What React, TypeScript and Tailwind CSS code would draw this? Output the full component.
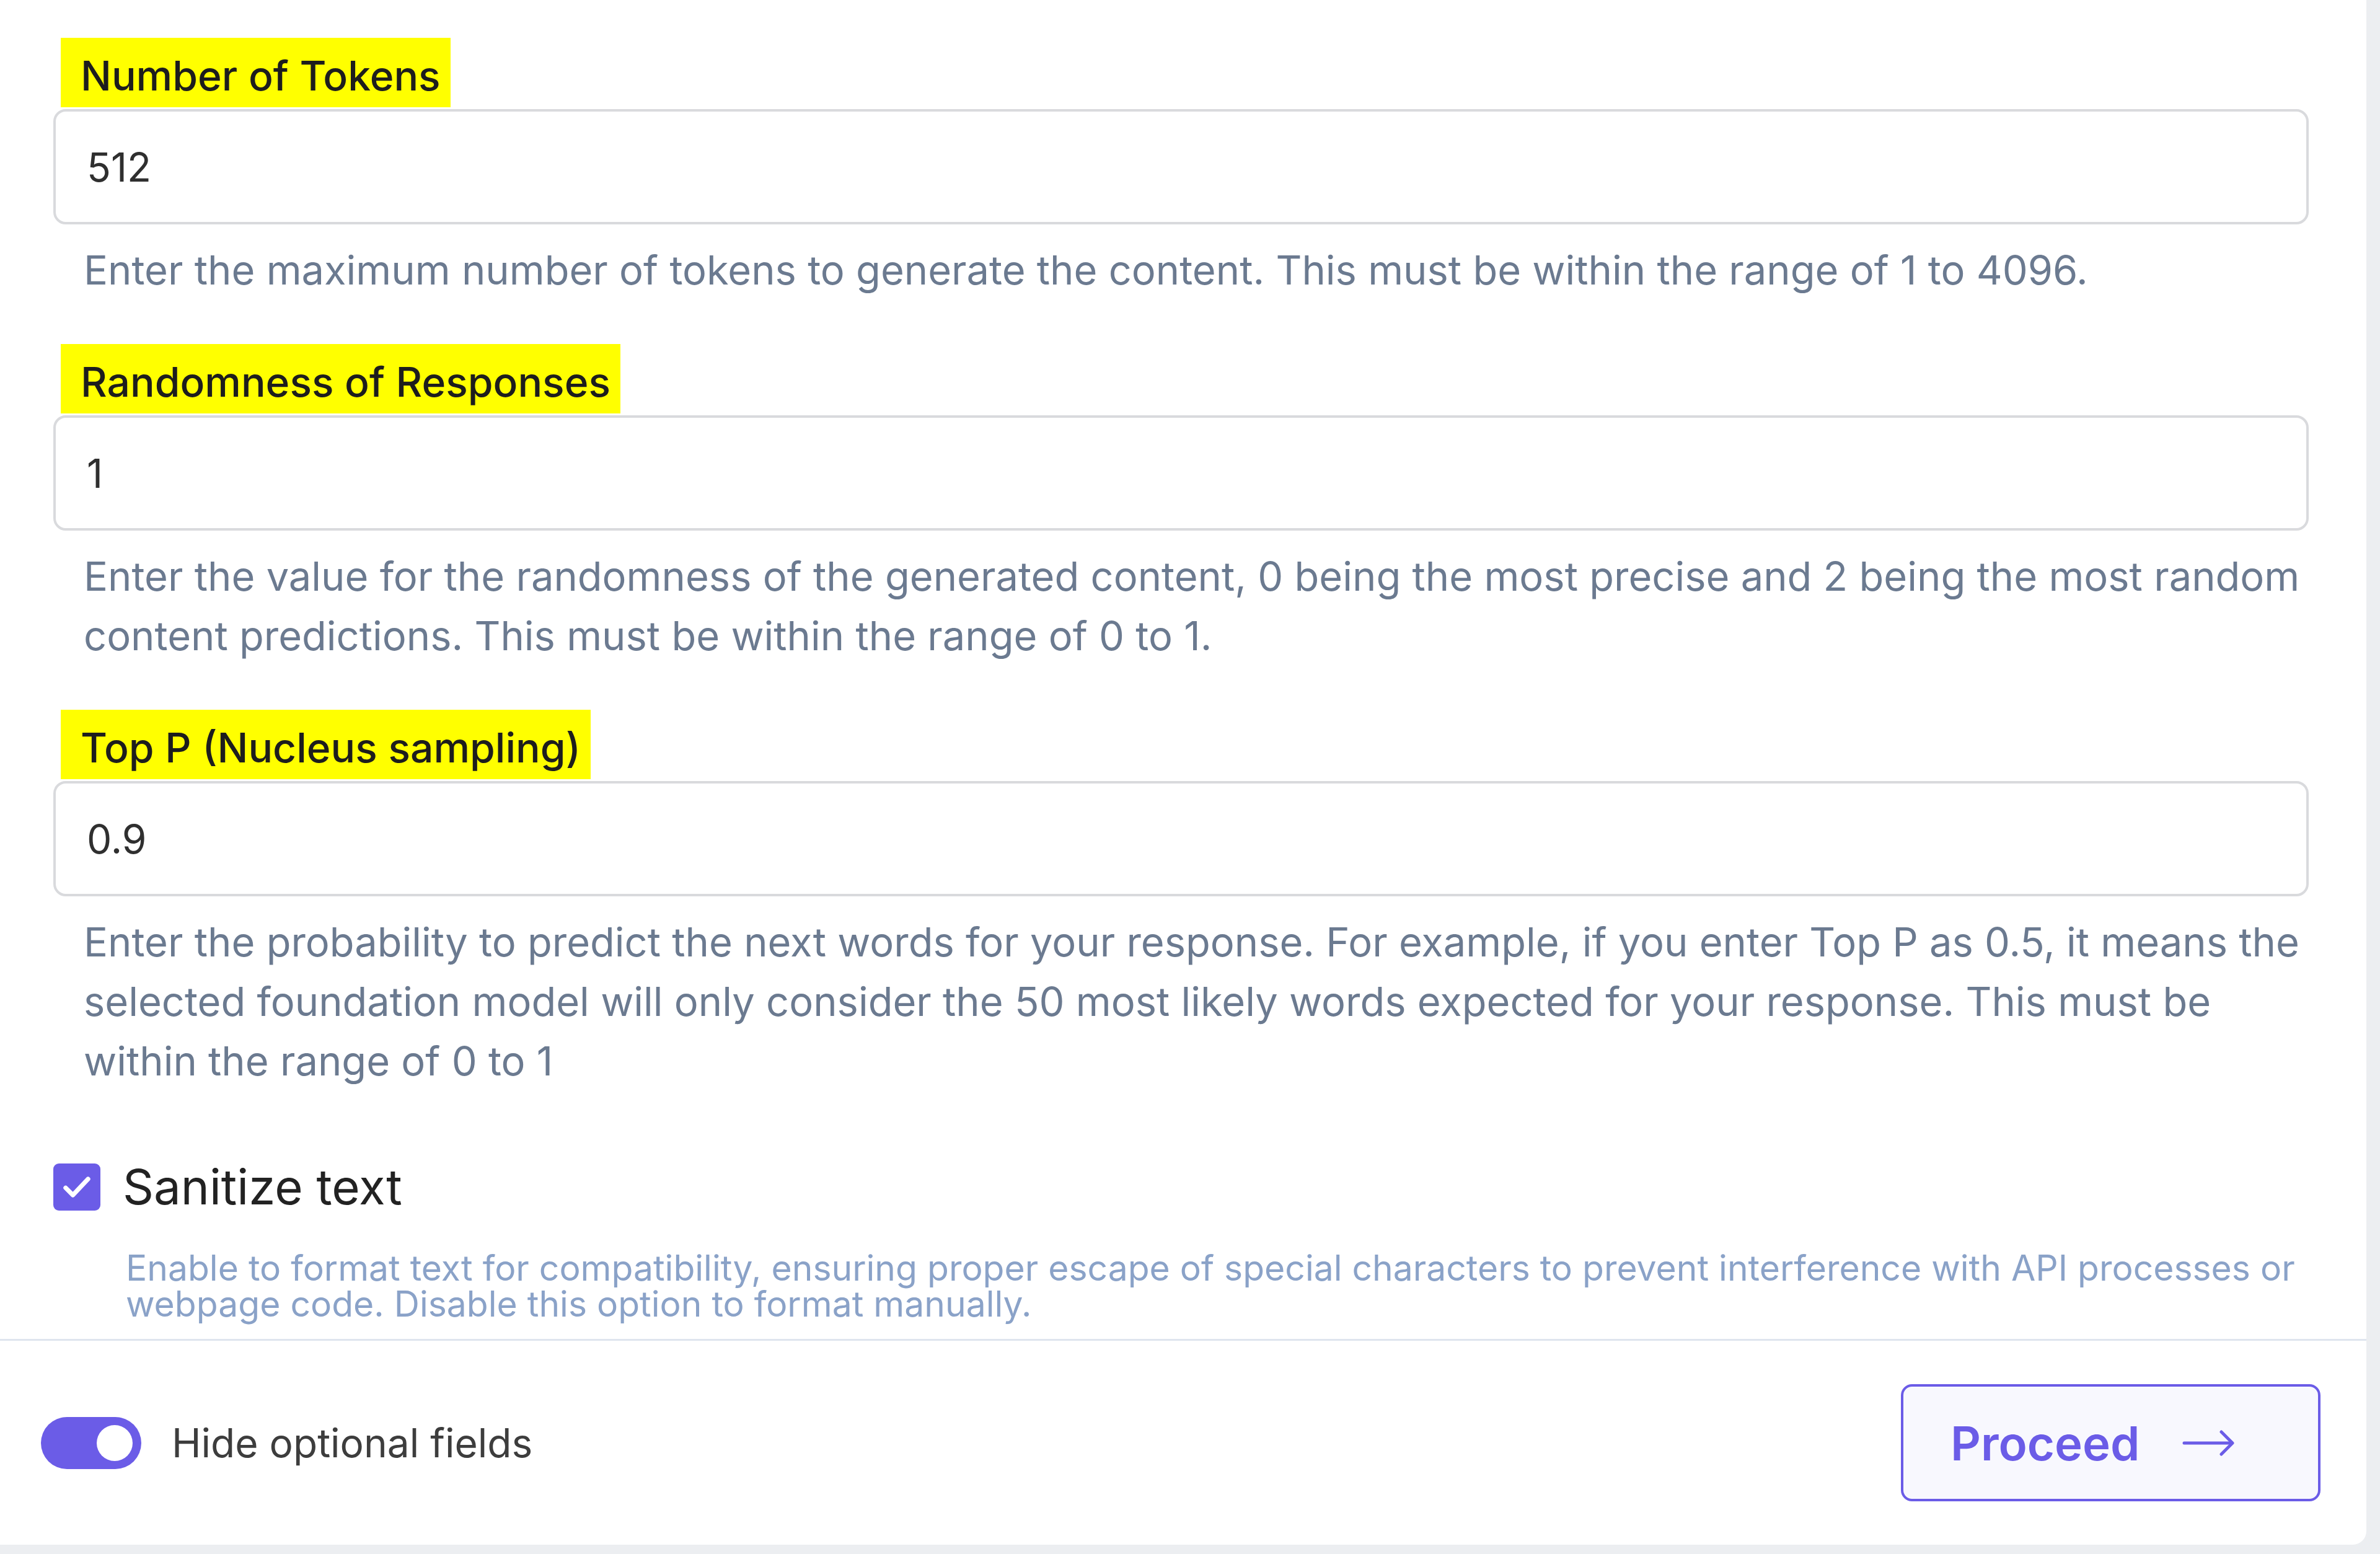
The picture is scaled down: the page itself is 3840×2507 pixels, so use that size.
import { useState } from "react";

const FIELDS = [
  {
    label: "Number of Tokens",
    value: "512",
    hint: "Enter the maximum number of tokens to generate the content. This must be within the range of 1 to 4096.",
  },
  {
    label: "Randomness of Responses",
    value: "1",
    hint: "Enter the value for the randomness of the generated content, 0 being the most precise and 2 being the most random content predictions. This must be within the range of 0 to 1.",
  },
  {
    label: "Top P (Nucleus sampling)",
    value: "0.9",
    hint: "Enter the probability to predict the next words for your response. For example, if you enter Top P as 0.5, it means the selected foundation model will only consider the 50 most likely words expected for your response. This must be within the range of 0 to 1",
  },
];

function Field({ label, value, hint, first }: { label: string; value: string; hint: string; first?: boolean }) {
  const [val, setVal] = useState(value);
  return (
    <div className={first ? "" : "mt-[71px]"}>
      <div>
        <span className="inline-block bg-[#ffff00] ml-[12px] pl-[32px] pr-[16px] pt-[28px] pb-[18px] text-[66px] leading-none font-medium text-[#1d1d1d]">
          {label}
        </span>
      </div>
      <input
        type="text"
        value={val}
        onChange={(e) => setVal(e.target.value)}
        className="mt-[3px] block w-full h-[186px] rounded-[20px] border-[4px] border-[#d9dadd] bg-white px-[50px] text-[64px] text-[#2f2f2f] focus:outline-none"
      />
      <p className="mt-[26px] pl-[49px] pr-[10px] text-[65px] leading-[96px] text-[#6b7a90]">{hint}</p>
    </div>
  );
}

export default function App() {
  const [sanitize, setSanitize] = useState(true);
  const [hideOptional, setHideOptional] = useState(true);

  return (
    <div className="min-h-screen bg-[#eceef1] font-['Inter','Noto_Sans',sans-serif]">
      <div className="w-[3818px] h-[2492px] bg-white rounded-br-[22px] flex flex-col">
        {/* Model parameters */}
        <div className="pt-[61px] pl-[86px] pr-[93px]">
          {FIELDS.map((f, i) => (
            <Field key={f.label} {...f} first={i === 0} />
          ))}

          {/* Sanitize option */}
          <div className="mt-[116px] flex items-center gap-[36px]">
            <button
              onClick={() => setSanitize(!sanitize)}
              className="w-[76px] h-[76px] rounded-[9px] bg-[#6b5ce7] flex items-center justify-center"
            >
              {sanitize && (
                <svg width="62" height="62" viewBox="0 0 24 24" fill="none" stroke="white" strokeWidth="2.8" strokeLinecap="round" strokeLinejoin="round">
                  <path d="M5 12.5l4.5 4.5L19 7" />
                </svg>
              )}
            </button>
            <span className="text-[78px] leading-none text-[#222222]">Sanitize text</span>
          </div>
          <p className="mt-[63px] pl-[117px] pr-[10px] text-[57px] leading-[58px] text-[#8aa2c8]">
            Enable to format text for compatibility, ensuring proper escape of special characters to prevent interference with API processes or webpage code. Disable this option to format manually.
          </p>
        </div>

        {/* Footer */}
        <div className="mt-[27px] border-t-[3px] border-[#dfe5ee] flex-1 flex items-center justify-between pl-[66px] pr-[74px]">
          <div className="flex items-center gap-[49px]">
            <button
              onClick={() => setHideOptional(!hideOptional)}
              className={`w-[162px] h-[84px] rounded-full flex items-center px-[14px] ${
                hideOptional ? "bg-[#6b5ce7] justify-end" : "bg-[#d1d5db] justify-start"
              }`}
            >
              <span className="w-[58px] h-[58px] rounded-full bg-white" />
            </button>
            <span className="text-[64px] leading-none text-[#3d3d3d]">Hide optional fields</span>
          </div>
          <button className="w-[677px] h-[189px] rounded-[18px] border-[4px] border-[#6b5ce7] bg-[#f8f8fe] flex items-center pl-[76px] gap-[69px] text-[76px] font-semibold text-[#6b5ce7]">
            Proceed
            <svg width="84" height="44" viewBox="0 0 84 44" fill="none" stroke="#6b5ce7" strokeWidth="5" strokeLinecap="round" strokeLinejoin="round">
              <path d="M3 22H80" />
              <path d="M63 4L81 22L63 40" />
            </svg>
          </button>
        </div>
      </div>
    </div>
  );
}
